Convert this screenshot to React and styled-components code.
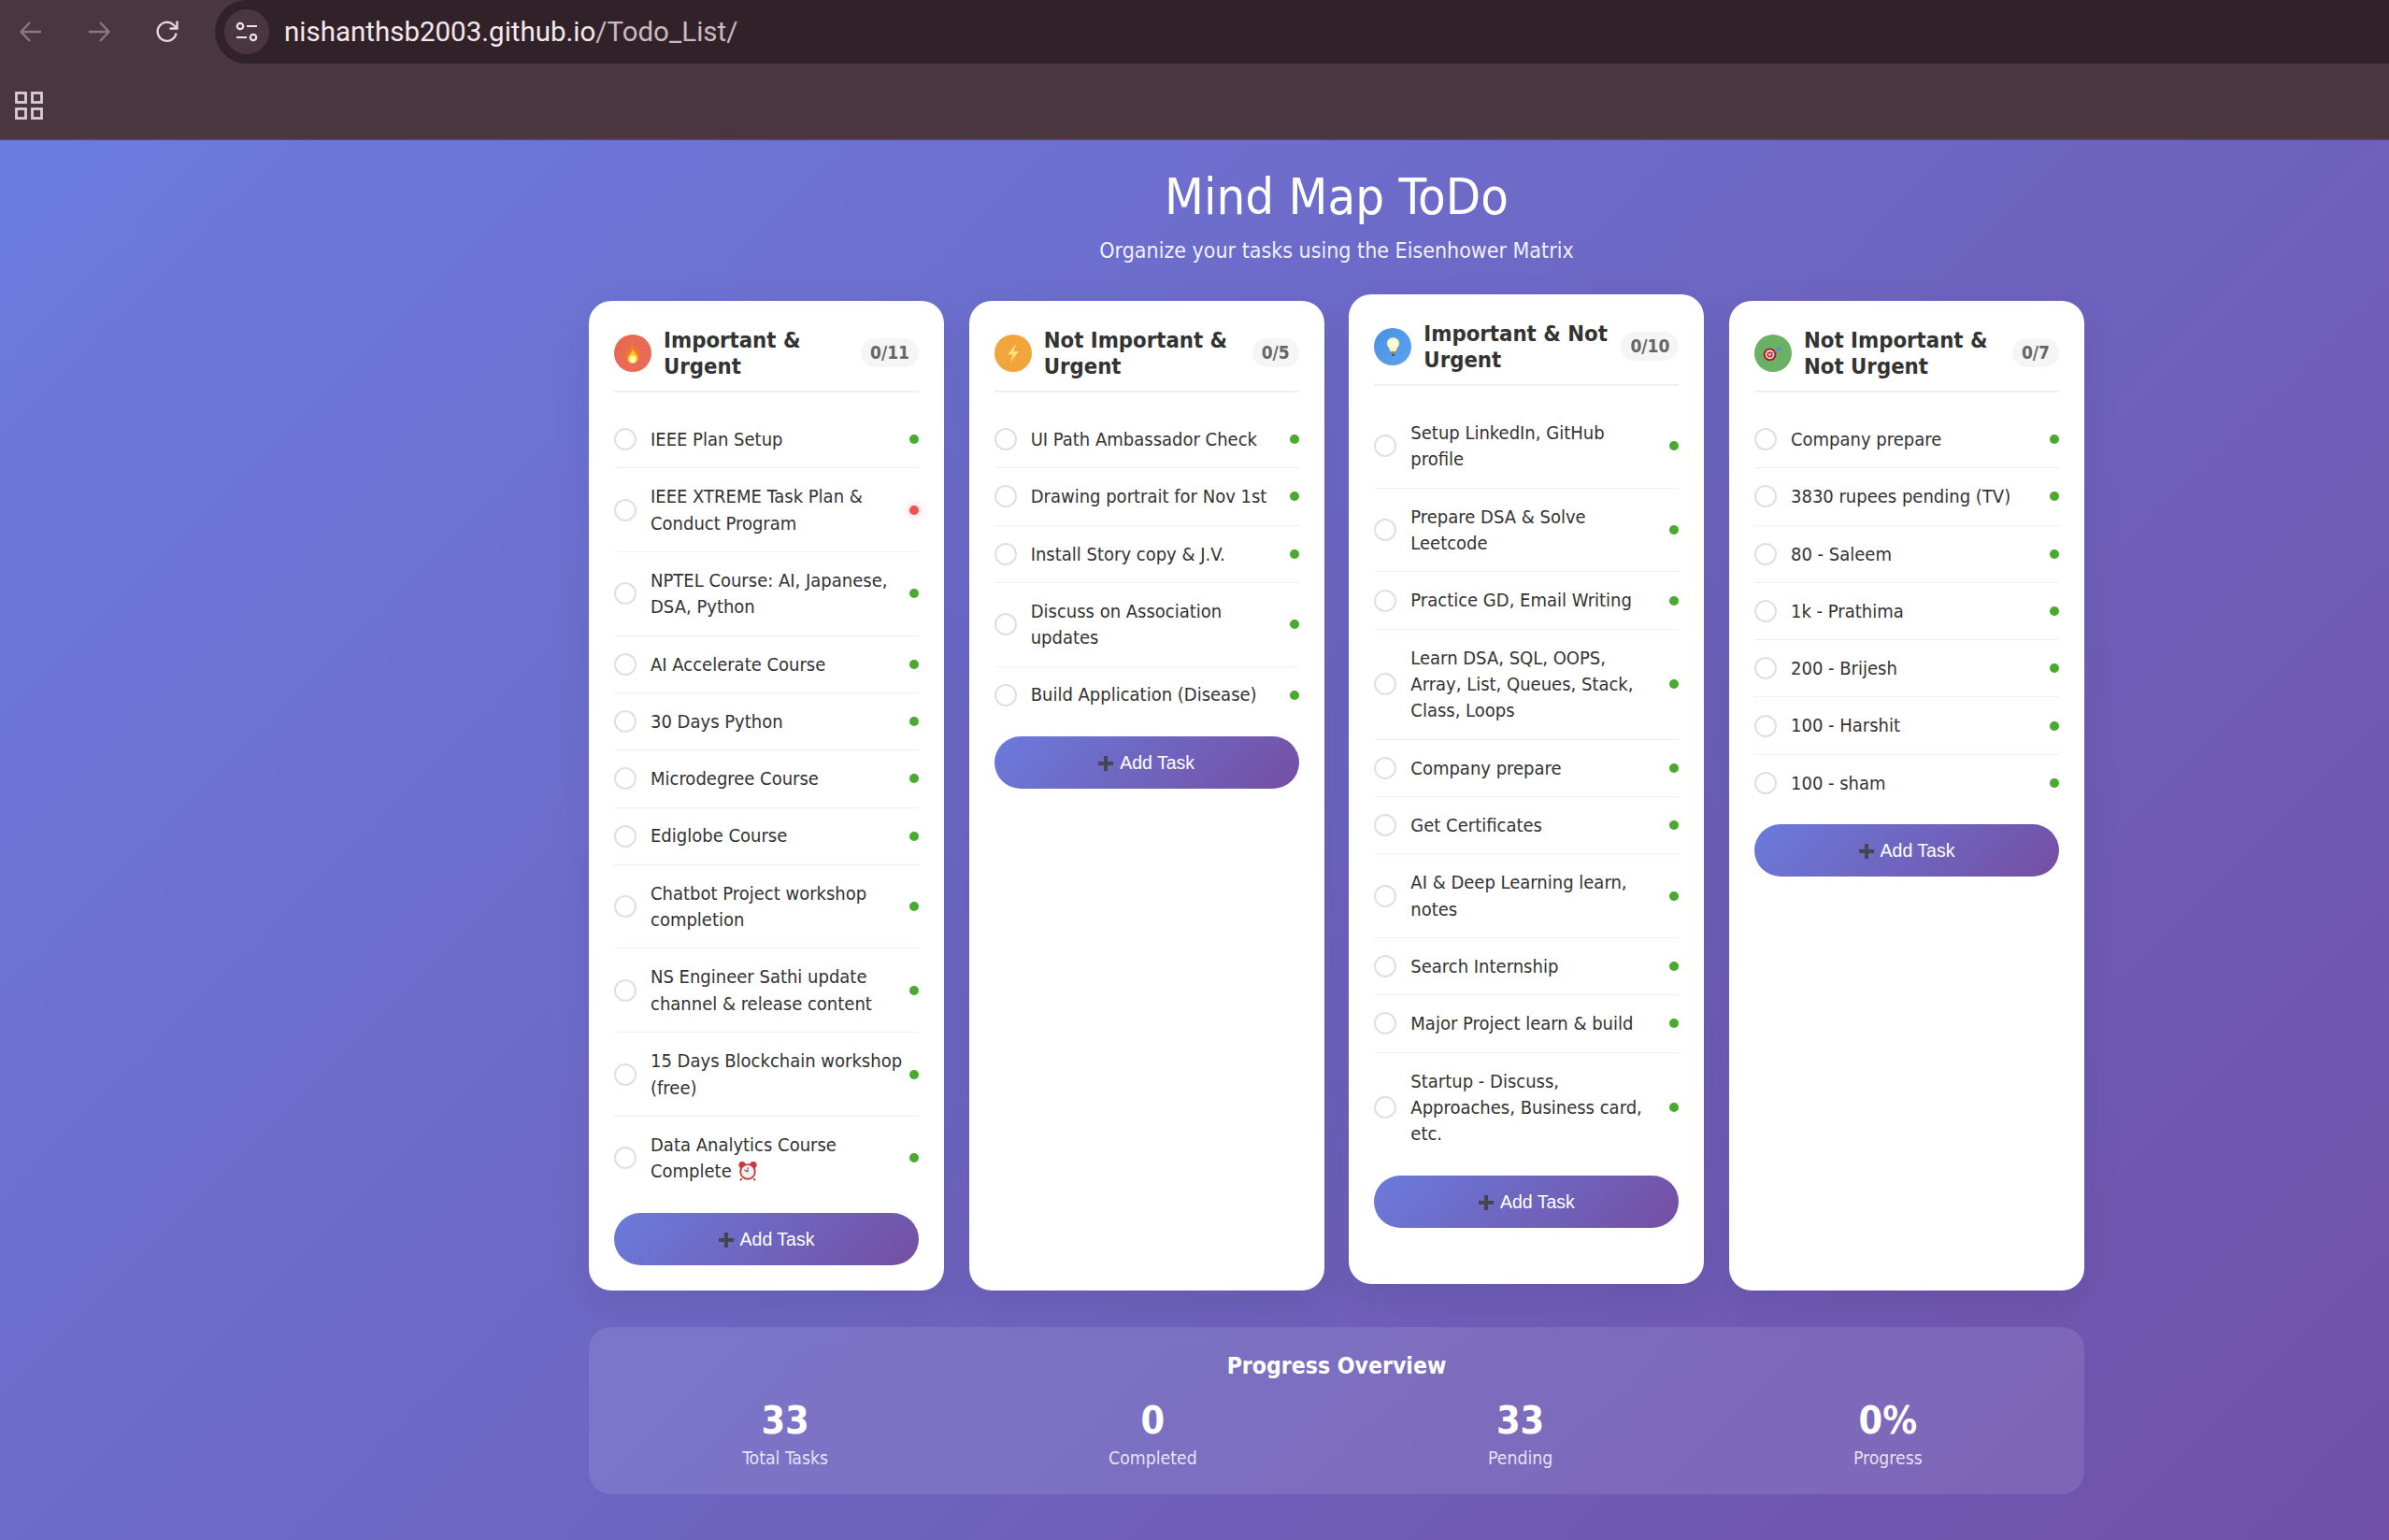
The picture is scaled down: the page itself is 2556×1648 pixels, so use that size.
import styled, { createGlobalStyle } from "styled-components";

const GlobalStyle = createGlobalStyle`
  * { box-sizing: border-box; }
  html, body { margin: 0; padding: 0; background: #6f52a8; }
  body { font-family: "DejaVu Sans Condensed", "DejaVu Sans", sans-serif; color: #333; }
`;

const Shell = styled.div`
  width: 2556px;
  height: 1648px;
  display: flex;
  flex-direction: column;
  overflow: hidden;
`;

const TopBar = styled.div`
  height: 68px;
  display: flex;
  align-items: center;
  background: #49363f;
  flex: none;
`;

const NavGroup = styled.div`
  width: 230px;
  display: flex;
  gap: 7px;
`;

const NavButton = styled.div`
  width: 66px;
  height: 68px;
  display: flex;
  align-items: center;
  justify-content: center;
  color: ${(p) => (p.$dim ? "#8a7780" : "#e6d5dc")};
`;

const UrlPill = styled.div`
  flex: 1;
  height: 68px;
  background: #312229;
  border-radius: 34px 0 0 34px;
  display: flex;
  align-items: center;
  padding-left: 10px;
  gap: 16px;
`;

const SiteChip = styled.div`
  width: 48px;
  height: 48px;
  border-radius: 50%;
  background: #49363f;
  display: flex;
  align-items: center;
  justify-content: center;
  color: #efe2e7;
`;

const UrlText = styled.div`
  font-family: Roboto, sans-serif;
  font-size: 29.5px;
  color: #f3e9ed;
  span { color: #c9b9c0; }
`;

const BookmarkBar = styled.div`
  height: 82px;
  flex: none;
  background: #49363f;
  border-bottom: 2px solid #54424a;
  display: flex;
  align-items: center;
  padding: 10px 0 0 16px;
  color: #dccdd3;
`;

const Page = styled.main`
  flex: 1;
  background: linear-gradient(135deg, #6b7cde 0%, #7050a8 100%);
  padding: 0 326px 0 630px;
`;

const Heading = styled.header`
  height: 172px;
  padding-top: 27px;
  text-align: center;
  color: #fff;
`;

const Title = styled.h1`
  margin: 0;
  font-size: 54px;
  font-weight: 400;
  line-height: 68px;
`;

const Subtitle = styled.p`
  margin: 8px 0 0;
  font-size: 23px;
  line-height: 31px;
  color: rgba(255, 255, 255, 0.92);
`;

const Board = styled.section`
  display: grid;
  grid-template-columns: repeat(4, 1fr);
  gap: 26.67px;
  height: 1058px;
`;

const Column = styled.article`
  background: #fff;
  border-radius: 24px;
  padding: 27px;
  box-shadow: 0 13px 40px rgba(0, 0, 0, 0.08);
  transform: ${(p) => (p.$lifted ? "translateY(-7px)" : "none")};
`;

const ColumnHeader = styled.div`
  display: flex;
  align-items: center;
  height: 71px;
  padding-bottom: 11px;
  border-bottom: 2px solid #f0f0f0;
  margin-bottom: 20px;
`;

const IconCircle = styled.div`
  width: 40px;
  height: 40px;
  flex: none;
  border-radius: 50%;
  background: ${(p) => p.$bg};
  display: flex;
  align-items: center;
  justify-content: center;
  margin-top: -1px;
`;

const ColumnTitle = styled.h2`
  flex: 1;
  margin: 0 0 0 13px;
  font-size: 23.7px;
  font-weight: 700;
  line-height: 28.5px;
  color: #333;
`;

const Count = styled.span`
  flex: none;
  height: 31px;
  padding: 0 10px;
  border-radius: 16px;
  background: #f5f5f5;
  color: #666;
  font-size: 19px;
  font-weight: 700;
  line-height: 31px;
  margin-top: -1px;
`;

const TaskRow = styled.div`
  display: flex;
  align-items: center;
  padding: 15.95px 0;
  border-bottom: ${(p) => (p.$last ? "none" : "1px solid #f0f0f0")};
`;

const Check = styled.span`
  width: 24px;
  height: 24px;
  flex: none;
  border-radius: 50%;
  border: 2px solid #e0e0e0;
  margin-right: 15px;
`;

const TaskText = styled.span`
  flex: 1;
  font-size: 20px;
  line-height: 28.4px;
  color: #333;
  white-space: pre-line;
  svg { vertical-align: -4px; margin-left: 6px; }
`;

const Dot = styled.span`
  width: 10px;
  height: 10px;
  flex: none;
  border-radius: 50%;
  margin-left: 6px;
  background: ${(p) => (p.$high ? "#ef5350" : "#4aa92f")};
  box-shadow: ${(p) => (p.$high ? "0 0 10px rgba(239, 83, 80, 0.5)" : "none")};
`;

const AddButton = styled.button`
  width: 100%;
  height: 56px;
  margin-top: 14px;
  padding: 2px 0 0;
  border: 0;
  border-radius: 28px;
  background: linear-gradient(135deg, #6a7bdc 0%, #744fa2 100%);
  color: #fff;
  font-family: "Liberation Sans", Arial, sans-serif;
  font-size: 19.5px;
  display: flex;
  align-items: center;
  justify-content: center;
  gap: 7px;
`;

const ProgressPanel = styled.section`
  margin-top: 40px;
  height: 179px;
  border-radius: 24px;
  background: rgba(255, 255, 255, 0.1);
  padding: 25px 30px 0;
  color: #fff;
`;

const ProgressTitle = styled.h3`
  margin: 0;
  text-align: center;
  font-size: 24.6px;
  font-weight: 700;
  line-height: 34px;
`;

const StatGrid = styled.div`
  display: grid;
  grid-template-columns: repeat(4, 1fr);
  gap: 33px;
  margin-top: 16px;
`;

const Stat = styled.div`
  text-align: center;
`;

const StatValue = styled.div`
  font-size: 41px;
  font-weight: 700;
  line-height: 50px;
`;

const StatLabel = styled.div`
  font-size: 19.3px;
  line-height: 26px;
  margin-top: 3px;
  color: rgba(255, 255, 255, 0.82);
`;

const Arrow = ({ flip }) => (
  <svg width="28" height="28" viewBox="0 0 28 28" fill="none" stroke="currentColor" strokeWidth="2.4" style={flip ? { transform: "scaleX(-1)" } : undefined}>
    <path d="M25 14H4M13 4L3.5 14L13 24" />
  </svg>
);

const Reload = () => (
  <svg width="28" height="28" viewBox="0 0 28 28" fill="none" stroke="currentColor" strokeWidth="2.4">
    <path d="M23.5 15.5A10 10 0 1 1 20.5 6.5L24 10" />
    <path d="M24.5 2.5V10.5H16.5" />
  </svg>
);

const Tune = () => (
  <svg width="26" height="26" viewBox="0 0 26 26" fill="none" stroke="currentColor" strokeWidth="2.2">
    <circle cx="6" cy="7" r="3.2" />
    <path d="M13 7H24M2 19H13" />
    <circle cx="20" cy="19" r="3.2" />
  </svg>
);

const Grid = () => (
  <svg width="30" height="30" viewBox="0 0 30 30" fill="none" stroke="currentColor" strokeWidth="2.8">
    <rect x="1.5" y="1.5" width="10" height="10" />
    <rect x="18.5" y="1.5" width="10" height="10" />
    <rect x="1.5" y="18.5" width="10" height="10" />
    <rect x="18.5" y="18.5" width="10" height="10" />
  </svg>
);

const Fire = () => (
  <svg width="22" height="24" viewBox="0 0 22 24">
    <path d="M11 1C12 5 18 8 19 14C19.500 19 16 23 11 23C6 23 2.500 19 3 14C3.500 11 5 9.500 6 8C6.500 10 7.500 11 8.500 11C8 7 9 3.500 11 1Z" fill="#f4762a" />
    <path d="M11 7C12 11 17 13 16.500 18C16 21 13.500 22.800 11 22.800C8 22.800 5.500 20.500 5.500 18C5.500 14 10 12 11 7Z" fill="#fdc32b" />
    <ellipse cx="11" cy="18.500" rx="3.600" ry="4" fill="#fff6b8" />
  </svg>
);

const Bolt = () => (
  <svg width="20" height="24" viewBox="0 0 20 24">
    <path d="M13 2L4 13.500H9.500L6.500 22L16 10H10.500Z" fill="#ffe27a" />
  </svg>
);

const Bulb = () => (
  <svg width="17" height="22" viewBox="0 0 22 28">
    <path d="M11 1.500C5.500 1.500 2.500 5.500 2.500 9.500C2.500 14 6.500 16 7 20.500H15C15.500 16 19.500 14 19.500 9.500C19.500 5.500 16.500 1.500 11 1.500Z" fill="#fff3b8" />
    <circle cx="11" cy="9" r="5" fill="#fffbe6" />
    <rect x="7.500" y="20.500" width="7" height="4" fill="#8b8b8b" />
    <rect x="9" y="24.500" width="4" height="2" fill="#444" />
  </svg>
);

const Dart = () => (
  <svg width="22" height="18" viewBox="0 0 32 26">
    <circle cx="11" cy="15" r="10" fill="#a81f28" />
    <circle cx="11" cy="15" r="7" fill="#f2e6e2" />
    <circle cx="11" cy="15" r="4.600" fill="#c92a33" />
    <circle cx="11" cy="15" r="2" fill="#f2e6e2" />
    <path d="M11 15L24 7" stroke="#6f8a96" strokeWidth="1.600" />
    <path d="M22 4L27 1L28 5L31 6L26 10L22 8Z" fill="#4c9fc4" />
  </svg>
);

const AlarmClock = () => (
  <svg width="22" height="22" viewBox="0 0 24 24">
    <circle cx="5.500" cy="5" r="4" fill="#d0383c" />
    <circle cx="18.500" cy="5" r="4" fill="#d0383c" />
    <path d="M5 21L3.500 23M19 21L20.500 23" stroke="#b8292d" strokeWidth="2" />
    <circle cx="12" cy="13" r="9.500" fill="#c93a3e" />
    <circle cx="12" cy="13" r="7.500" fill="#f6f0ee" />
    <path d="M12 13L12 8M12 13L8 11" stroke="#555" strokeWidth="1.200" />
  </svg>
);

const Plus = () => (
  <svg width="16" height="16" viewBox="0 0 16 16">
    <path d="M6 0H10V6H16V10H10V16H6V10H0V6H6Z" fill="#45454f" />
  </svg>
);

const columns = [
  {
    title: "Important & Urgent",
    bg: "linear-gradient(135deg, #e8694f, #e96a5c)",
    icon: <Fire />,
    tasks: [
      "IEEE Plan Setup",
      "IEEE XTREME Task Plan & Conduct Program",
      "NPTEL Course: AI, Japanese, DSA, Python",
      "AI Accelerate Course",
      "30 Days Python",
      "Microdegree Course",
      "Ediglobe Course",
      "Chatbot Project workshop completion",
      "NS Engineer Sathi update channel & release content",
      "15 Days Blockchain workshop (free)",
      "Data Analytics Course Complete",
    ],
  },
  {
    title: "Not Important & Urgent",
    bg: "#f3a53d",
    icon: <Bolt />,
    tasks: [
      "UI Path Ambassador Check",
      "Drawing portrait for Nov 1st",
      "Install Story copy & J.V.",
      "Discuss on Association updates",
      "Build Application (Disease)",
    ],
  },
  {
    title: "Important & Not Urgent",
    bg: "linear-gradient(135deg, #4a90e2, #5ba3f0)",
    icon: <Bulb />,
    lifted: true,
    tasks: [
      "Setup LinkedIn, GitHub\nprofile",
      "Prepare DSA & Solve Leetcode",
      "Practice GD, Email Writing",
      "Learn DSA, SQL, OOPS,\nArray, List, Queues, Stack,\nClass, Loops",
      "Company prepare",
      "Get Certificates",
      "AI & Deep Learning learn, notes",
      "Search Internship",
      "Major Project learn & build",
      "Startup - Discuss, Approaches, Business card, etc.",
    ],
  },
  {
    title: "Not Important & Not Urgent",
    bg: "#6ab165",
    icon: <Dart />,
    tasks: [
      "Company prepare",
      "3830 rupees pending (TV)",
      "80 - Saleem",
      "1k - Prathima",
      "200 - Brijesh",
      "100 - Harshit",
      "100 - sham",
    ],
  },
];

const stats = [
  ["33", "Total Tasks"],
  ["0", "Completed"],
  ["33", "Pending"],
  ["0%", "Progress"],
];

export default function App() {
  return (
    <Shell>
      <GlobalStyle />
      <TopBar>
        <NavGroup>
          <NavButton $dim><Arrow /></NavButton>
          <NavButton $dim><Arrow flip /></NavButton>
          <NavButton><Reload /></NavButton>
        </NavGroup>
        <UrlPill>
          <SiteChip><Tune /></SiteChip>
          <UrlText>nishanthsb2003.github.io<span>/Todo_List/</span></UrlText>
        </UrlPill>
      </TopBar>
      <BookmarkBar><Grid /></BookmarkBar>
      <Page>
        <Heading>
          <Title>Mind Map ToDo</Title>
          <Subtitle>Organize your tasks using the Eisenhower Matrix</Subtitle>
        </Heading>
        <Board>
          {columns.map((col) => (
            <Column key={col.title} $lifted={col.lifted}>
              <ColumnHeader>
                <IconCircle $bg={col.bg}>{col.icon}</IconCircle>
                <ColumnTitle>{col.title}</ColumnTitle>
                <Count>0/{col.tasks.length}</Count>
              </ColumnHeader>
              {col.tasks.map((task, i) => (
                <TaskRow key={task} $last={i === col.tasks.length - 1}>
                  <Check />
                  <TaskText>
                    {task}
                    {task.startsWith("Data Analytics") && <AlarmClock />}
                  </TaskText>
                  <Dot $high={task.startsWith("IEEE XTREME")} />
                </TaskRow>
              ))}
              <AddButton><Plus />Add Task</AddButton>
            </Column>
          ))}
        </Board>
        <ProgressPanel>
          <ProgressTitle>Progress Overview</ProgressTitle>
          <StatGrid>
            {stats.map(([value, label]) => (
              <Stat key={label}>
                <StatValue>{value}</StatValue>
                <StatLabel>{label}</StatLabel>
              </Stat>
            ))}
          </StatGrid>
        </ProgressPanel>
      </Page>
    </Shell>
  );
}
